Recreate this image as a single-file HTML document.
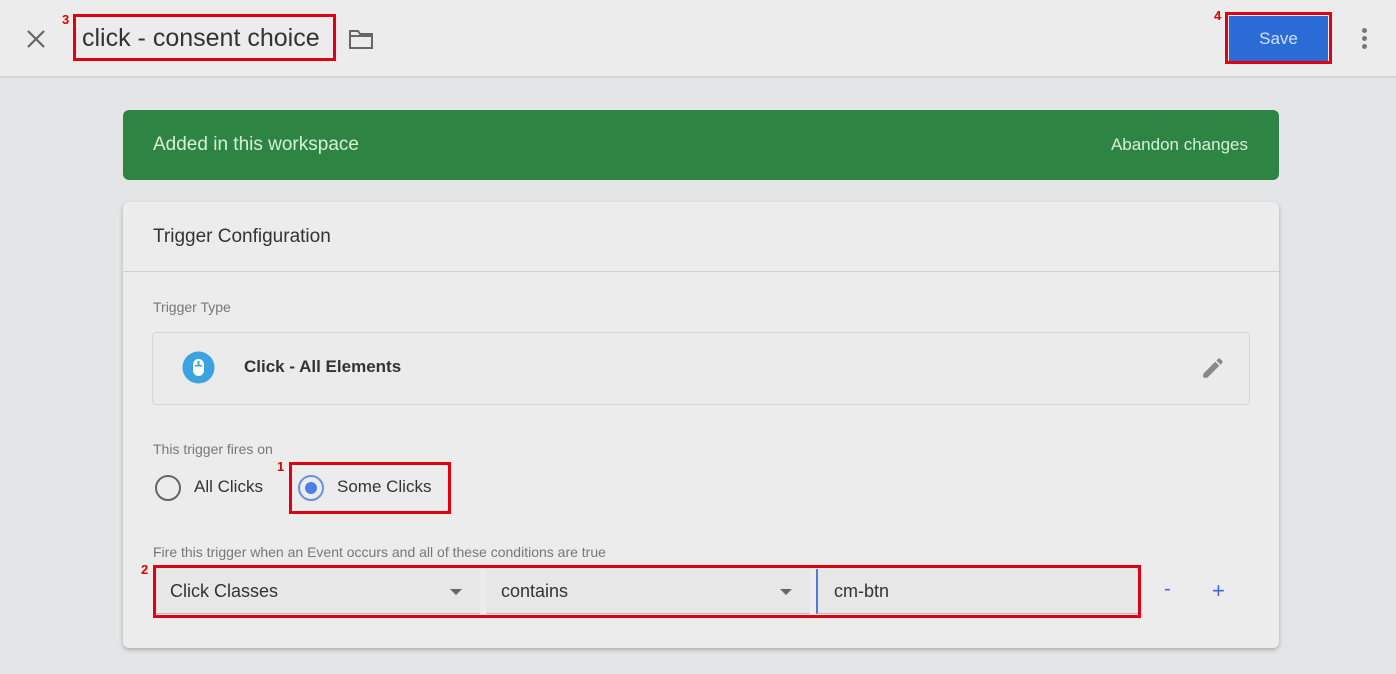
<!DOCTYPE html>
<html><head><meta charset="utf-8"><style>
*{box-sizing:border-box;margin:0;padding:0}
body{width:1396px;height:674px;overflow:hidden;background:#e3e5e6;font-family:"Liberation Sans",sans-serif;position:relative;color:#333}
.top{position:absolute;left:0;top:0;width:1396px;height:78px;background:#ececec;border-bottom:2px solid #d8d8d8}
.abs{position:absolute}
.red{position:absolute;border:3px solid #e00010}
.num{position:absolute;color:#d00;font-weight:bold;font-size:13px}
.green{position:absolute;left:123px;top:110px;width:1156px;height:70px;background:#2e8543;border-radius:6px;color:#d4f0d8;font-size:19px}
.card{position:absolute;left:123px;top:202px;width:1156px;height:446px;background:#ececec;border-radius:6px;box-shadow:0 2px 4px rgba(0,0,0,.25)}
.lbl{color:#777;font-size:14px;position:absolute}
.sel{position:absolute;top:569px;height:45px;background:#e7e7e7;border-bottom:1px solid #bbb;font-size:18px;color:#333;padding:12px 0 0 15px}
.tri{position:absolute;right:18px;top:20px;width:0;height:0;border-left:6px solid transparent;border-right:6px solid transparent;border-top:6px solid #666}
</style></head><body>
<div class="top"></div>
<svg class="abs" style="left:26px;top:29px" width="20" height="20" viewBox="0 0 20 20"><path d="M2 2L18 18M18 2L2 18" stroke="#666" stroke-width="2.2"/></svg>
<div class="abs" style="left:82px;top:24px;font-size:25px;color:#333">click - consent choice</div>
<div class="red" style="left:73px;top:14px;width:263px;height:47px"></div>
<div class="num" style="left:62px;top:12px">3</div>
<svg class="abs" style="left:348px;top:28px" width="26" height="22" viewBox="0 0 26 22"><path d="M2 3H10L12 6H24V20H2Z" fill="none" stroke="#666" stroke-width="2"/><path d="M2 8H24" stroke="#666" stroke-width="2"/></svg>
<div class="abs" style="left:1229px;top:16px;width:99px;height:45px;background:#2b6bd6;color:#cfe0ff;font-size:17px;text-align:center;line-height:45px">Save</div>
<div class="red" style="left:1225px;top:12px;width:107px;height:52px"></div>
<div class="num" style="left:1214px;top:8px">4</div>
<div class="abs" style="left:1362px;top:28px;width:5px;height:5px;border-radius:50%;background:#777;box-shadow:0 8px 0 #777,0 16px 0 #777"></div>

<div class="green"><span class="abs" style="left:30px;top:24px">Added in this workspace</span><span class="abs" style="right:31px;top:25px;font-size:17px">Abandon changes</span></div>

<div class="card">
<div class="abs" style="left:30px;top:24px;font-size:19px;color:#333">Trigger Configuration</div>
<div class="abs" style="left:0;top:69px;width:1156px;height:1px;background:#d2d2d2"></div>
</div>
<div class="lbl" style="left:153px;top:299px">Trigger Type</div>
<div class="abs" style="left:152px;top:332px;width:1098px;height:73px;border:1px solid #d5d5d5;border-radius:4px;background:#ebebeb"></div>
<svg class="abs" style="left:182px;top:351px" width="33" height="33" viewBox="0 0 33 33"><circle cx="16.5" cy="16.5" r="16" fill="#3aa3e0"/><rect x="11" y="8" width="11" height="17" rx="5.5" fill="#fff"/><rect x="15.5" y="10" width="2" height="4" fill="#3aa3e0"/><rect x="13" y="14" width="7" height="1.5" fill="#3aa3e0"/></svg>
<div class="abs" style="left:244px;top:357px;font-size:17px;font-weight:bold;color:#333">Click - All Elements</div>
<svg class="abs" style="left:1200px;top:355px" width="26" height="26" viewBox="0 0 24 24"><path d="M3 17.25V21h3.75L17.81 9.94l-3.75-3.75L3 17.25zM20.71 7.04a1 1 0 000-1.41l-2.34-2.34a1 1 0 00-1.41 0l-1.830 1.83 3.75 3.75 1.83-1.83z" fill="#888"/></svg>

<div class="lbl" style="left:153px;top:441px">This trigger fires on</div>
<div class="abs" style="left:155px;top:475px;width:26px;height:26px;border-radius:50%;border:2px solid #666"></div>
<div class="abs" style="left:194px;top:477px;font-size:17px;color:#333">All Clicks</div>
<div class="abs" style="left:298px;top:475px;width:26px;height:26px;border-radius:50%;border:2px solid #6a8fe0"></div>
<div class="abs" style="left:305px;top:482px;width:12px;height:12px;border-radius:50%;background:#4d7fe6"></div>
<div class="abs" style="left:337px;top:477px;font-size:17px;color:#333">Some Clicks</div>
<div class="red" style="left:289px;top:462px;width:162px;height:52px"></div>
<div class="num" style="left:277px;top:459px">1</div>

<div class="lbl" style="left:153px;top:544px">Fire this trigger when an Event occurs and all of these conditions are true</div>
<div class="sel" style="left:155px;width:325px">Click Classes<div class="tri"></div></div>
<div class="sel" style="left:486px;width:324px">contains<div class="tri"></div></div>
<div class="sel" style="left:816px;width:322px;border-left:2px solid #4a7fd8;padding-left:16px">cm-btn</div>
<div class="red" style="left:153px;top:565px;width:988px;height:53px"></div>
<div class="num" style="left:141px;top:562px">2</div>
<div class="abs" style="left:1164px;top:578px;font-size:20px;color:#3b6dd0">-</div>
<div class="abs" style="left:1212px;top:578px;font-size:22px;color:#3b6dd0">+</div>
</body></html>
